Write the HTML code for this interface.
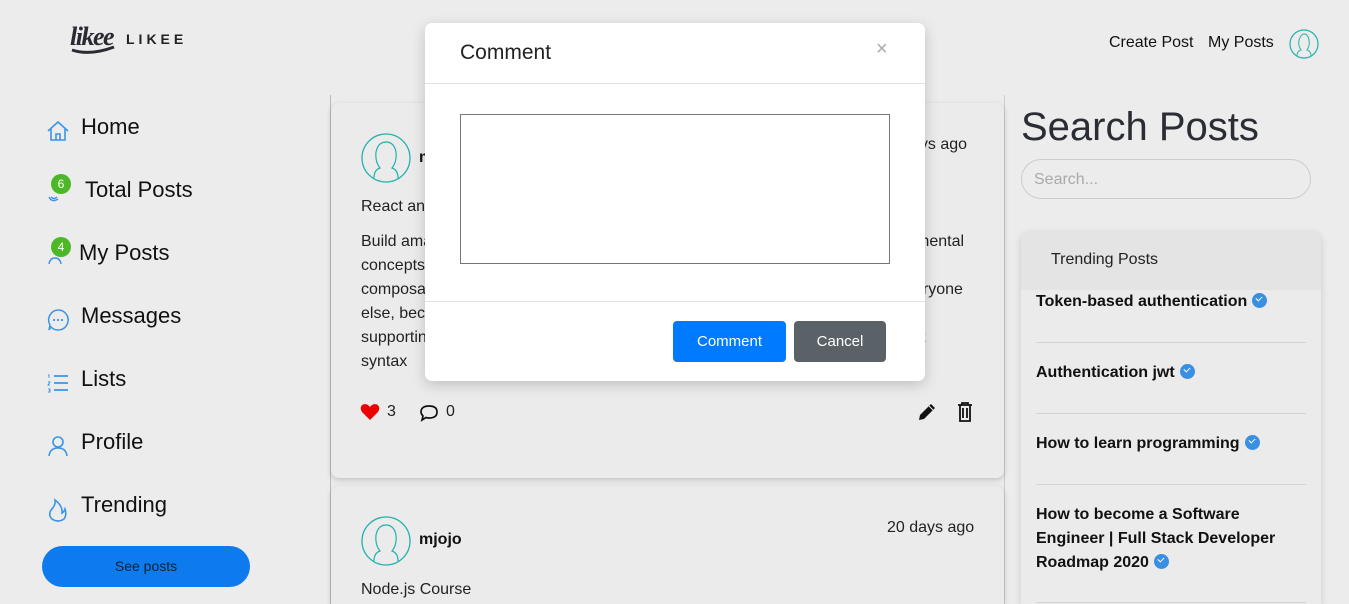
<!DOCTYPE html>
<html style="height:604px;overflow:hidden"><head><meta charset="utf-8"><style>
*{box-sizing:border-box;margin:0;padding:0}
body{width:1349px;height:604px;overflow:hidden;background:#ececec;font-family:"Liberation Sans",sans-serif;color:#111;position:relative}
.abs{position:absolute}
.nav{position:absolute;left:46px;font-size:22px;display:flex;align-items:center}
.nav svg{position:absolute;left:0}
.badge{position:absolute;width:20px;height:20px;border-radius:50%;background:#4cb827;color:#fff;font-size:12px;text-align:center;line-height:20px}
.card{position:absolute;left:331px;width:673px;background:#ebebeb;border-radius:8px;box-shadow:0 2px 6px rgba(0,0,0,.18)}
.txt{font-size:16px;color:#222}
.tr{position:absolute;left:1036px;width:270px;font-weight:bold;font-size:16px;line-height:24px;color:#111}
.chk{display:inline-block;width:15px;height:15px;border-radius:50%;background:#3a8fe0;vertical-align:-2px;position:relative;margin-left:5px}
.chk:after{content:"";position:absolute;left:4px;top:3px;width:5px;height:3px;border-left:1.5px solid #fff;border-bottom:1.5px solid #fff;transform:rotate(-45deg)}
.hr{position:absolute;left:1036px;width:270px;height:1px;background:#d4d4d4}
</style></head><body>
<!-- logo -->
<div class="abs" style="left:70px;top:22px;font:italic bold 26px 'Liberation Serif',serif;color:#2a2a33;letter-spacing:-1.5px">likee</div>
<svg class="abs" style="left:70px;top:44px" width="46" height="12"><path d="M2 6 Q20 12 44 3" stroke="#2a2a33" stroke-width="3" fill="none"/></svg>
<div class="abs" style="left:126px;top:31px;font-size:14px;letter-spacing:4px;font-weight:bold;color:#222">LIKEE</div>
<!-- top right -->
<div class="abs" style="left:1109px;top:34px;font-size:16px">Create Post</div>
<div class="abs" style="left:1208px;top:34px;font-size:16px">My Posts</div>
<svg class="abs" style="left:1289px;top:29px" width="30" height="30"><circle cx="15" cy="15" r="14" fill="none" stroke="#20b2aa" stroke-width="1.2"/><path d="M8 27 Q8 22 12 21 Q9 17 10 11 Q12 5 15 5 Q19 5 20 11 Q21 17 18 21 Q22 22 22 27" fill="none" stroke="#20b2aa" stroke-width="1"/></svg>
<!-- sidebar -->
<div class="nav" style="top:114px"><svg width="24" height="24" viewBox="0 0 24 24" style="top:5px"><path d="M2 12 L12 3 L22 12 M5 10 V21 H19 V10 M10 21 V15 H14 V21" fill="none" stroke="#3a95e8" stroke-width="1.6"/></svg><span style="margin-left:35px">Home</span></div>
<div class="nav" style="top:177px"><svg width="20" height="20" style="top:6px"><path d="M3 14 Q6 20 12 16 M5 14 Q8 17 11 14" fill="none" stroke="#3a95e8" stroke-width="1.4"/></svg><span class="badge" style="left:5px;top:-3px">6</span><span style="margin-left:39px">Total Posts</span></div>
<div class="nav" style="top:240px"><svg width="20" height="20" style="top:6px"><path d="M3 18 Q4 12 9 12 Q14 12 15 18" fill="none" stroke="#3a95e8" stroke-width="1.4"/></svg><span class="badge" style="left:5px;top:-3px">4</span><span style="margin-left:33px">My Posts</span></div>
<div class="nav" style="top:303px"><svg width="24" height="24" style="top:5px"><path d="M12 2 A10 10 0 1 1 5 19 L3 22 L4 17 A10 10 0 0 1 12 2Z" fill="none" stroke="#3a95e8" stroke-width="1.5"/><circle cx="8" cy="12" r="1.1" fill="#3a95e8"/><circle cx="12" cy="12" r="1.1" fill="#3a95e8"/><circle cx="16" cy="12" r="1.1" fill="#3a95e8"/></svg><span style="margin-left:35px">Messages</span></div>
<div class="nav" style="top:366px"><svg width="24" height="24" style="top:5px"><path d="M8 5 H22 M8 12 H22 M8 19 H22" stroke="#3a95e8" stroke-width="1.8"/><path d="M2 4 H3 V7 M2 11 H4 L2 14 H4 M2 18 H4 V21 H2 M3 19.5 H4" stroke="#3a95e8" stroke-width="0.9" fill="none"/></svg><span style="margin-left:35px">Lists</span></div>
<div class="nav" style="top:429px"><svg width="24" height="24" style="top:5px"><circle cx="12" cy="8" r="5" fill="none" stroke="#3a95e8" stroke-width="1.6"/><path d="M3 22 Q4 14 12 14 Q20 14 21 22" fill="none" stroke="#3a95e8" stroke-width="1.6"/></svg><span style="margin-left:35px">Profile</span></div>
<div class="nav" style="top:492px"><svg width="24" height="26" style="top:5px"><path d="M9 3 Q10 8 5 13 Q2 18 6 22 Q12 26 18 22 Q21 18 19 12 Q18 15 16 16 Q17 9 9 3Z" fill="none" stroke="#3a95e8" stroke-width="1.6"/></svg><span style="margin-left:35px">Trending</span></div>
<div class="abs" style="left:42px;top:546px;width:208px;height:41px;border-radius:21px;background:#0d7aed;color:#102030;font-size:14px;text-align:center;line-height:41px">See posts</div>
<!-- center -->
<div class="abs" style="left:330px;top:95px;width:1px;height:509px;background:#bbb"></div>
<div class="abs" style="left:1004px;top:95px;width:1px;height:509px;background:#ccc"></div>
<div class="card" style="top:103px;height:375px">
<svg class="abs" style="left:30px;top:30px" width="50" height="50"><circle cx="25" cy="25" r="24" fill="none" stroke="#20b2aa" stroke-width="1.3"/><path d="M13 45 Q13 37 19 35 Q14 29 15 19 Q17 9 25 9 Q33 9 35 19 Q36 29 31 35 Q37 37 37 45" fill="none" stroke="#20b2aa" stroke-width="1.2"/></svg>
<div class="abs" style="left:88px;top:46px;font-weight:bold;font-size:16px">m</div>
<div class="abs txt" style="left:580px;top:33px">ays ago</div>
<div class="abs txt" style="left:30px;top:95px">React an</div>
<div class="abs txt" style="left:30px;top:127px;line-height:24px">Build ama<br>concepts<br>composa<br>else, bec<br>supportin<br>syntax</div>
<div class="abs txt" style="left:585px;top:127px;line-height:24px">mental</div>
<div class="abs txt" style="left:583px;top:175px;line-height:24px">eryone</div>
<div class="abs txt" style="left:580px;top:199px;line-height:24px">n</div>
<div class="abs txt" style="left:590px;top:223px;line-height:24px">t</div>
<svg class="abs" style="left:29px;top:300px" width="20" height="18"><path d="M10 17 L2 9 Q-1 4 3 1.5 Q7 0 10 4 Q13 0 17 1.5 Q21 4 18 9Z" fill="#e00"/></svg>
<div class="abs txt" style="left:56px;top:300px">3</div>
<svg class="abs" style="left:88px;top:300px" width="20" height="20"><path d="M10 3 Q18 3 18 9 Q18 15 10 15 Q8 15 7 14.5 L3 17 L4 13 Q2 11 2 9 Q2 3 10 3Z" fill="none" stroke="#111" stroke-width="1.7"/></svg>
<div class="abs txt" style="left:115px;top:300px">0</div>
<svg class="abs" style="left:586px;top:299px" width="20" height="20"><path d="M2 18 L3 13 L14 2 L18 6 L7 17Z" fill="#111"/><path d="M12 4 L16 8" stroke="#ebebeb" stroke-width="1"/></svg>
<svg class="abs" style="left:625px;top:298px" width="18" height="22"><path d="M2 4 H16 M6 4 V2 H12 V4 M4 4 V20 H14 V4 M7 7 V17 M11 7 V17" fill="none" stroke="#111" stroke-width="1.8"/></svg>
</div>
<div class="card" style="top:486px;height:118px;border-radius:8px 8px 0 0">
<svg class="abs" style="left:30px;top:30px" width="50" height="50"><circle cx="25" cy="25" r="24" fill="none" stroke="#20b2aa" stroke-width="1.3"/><path d="M13 45 Q13 37 19 35 Q14 29 15 19 Q17 9 25 9 Q33 9 35 19 Q36 29 31 35 Q37 37 37 45" fill="none" stroke="#20b2aa" stroke-width="1.2"/></svg>
<div class="abs" style="left:88px;top:45px;font-weight:bold;font-size:16px">mjojo</div>
<div class="abs txt" style="left:556px;top:33px">20 days ago</div>
<div class="abs txt" style="left:30px;top:95px">Node.js Course</div>
</div>
<!-- right -->
<div class="abs" style="left:1021px;top:105px;font-size:40px;color:#2a2d33">Search Posts</div>
<div class="abs" style="left:1021px;top:159px;width:290px;height:40px;border:1px solid #ccc;border-radius:20px;padding-left:12px;line-height:40px;color:#aaa;font-size:16px">Search...</div>
<div class="abs" style="left:1021px;top:232px;width:300px;height:372px;background:#ebebeb;border-radius:8px 8px 0 0;box-shadow:0 2px 8px rgba(0,0,0,.15);overflow:hidden"><div style="height:58px;background:#e4e4e5;padding:19px 0 0 30px;font-size:16px;color:#222">Trending Posts</div></div>
<div class="tr" style="top:290px">Token-based authentication<span class="chk"></span></div>
<div class="hr" style="top:342px"></div>
<div class="tr" style="top:361px">Authentication jwt<span class="chk"></span></div>
<div class="hr" style="top:413px"></div>
<div class="tr" style="top:432px">How to learn programming<span class="chk"></span></div>
<div class="hr" style="top:484px"></div>
<div class="tr" style="top:503px">How to become a Software Engineer | Full Stack Developer Roadmap 2020<span class="chk"></span></div>
<div class="hr" style="top:602px"></div>
<!-- modal -->
<div class="abs" style="left:425px;top:23px;width:500px;height:358px;background:#fff;border-radius:7px;box-shadow:0 4px 14px rgba(0,0,0,.18)">
<div class="abs" style="left:35px;top:18px;font-size:21px;color:#222">Comment</div>
<div class="abs" style="left:451px;top:15px;font-size:20px;color:#aaa">×</div>
<div class="abs" style="left:0;top:60px;width:500px;height:1px;background:#dee2e6"></div>
<div class="abs" style="left:35px;top:91px;width:430px;height:150px;border:1px solid #767676"></div>
<div class="abs" style="left:0;top:278px;width:500px;height:1px;background:#dee2e6"></div>
<div class="abs" style="left:248px;top:298px;width:113px;height:41px;background:#007bff;border-radius:4px;color:#fff;font-size:15px;text-align:center;line-height:41px">Comment</div>
<div class="abs" style="left:369px;top:298px;width:92px;height:41px;background:#5a6268;border-radius:4px;color:#fff;font-size:15px;text-align:center;line-height:41px">Cancel</div>
</div>
</body></html>
